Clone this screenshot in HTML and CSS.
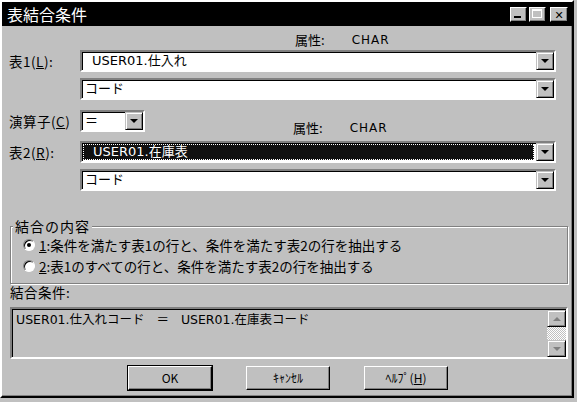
FILE: index.html
```html
<!doctype html>
<html lang="ja">
<head>
	<meta charset="UTF-8">
	<title>表結合条件</title>
	<link rel="stylesheet" href="styles.css">
</head>
<body>
	<div class="window">
		<div class="titlebar">
			<span class="title">表結合条件</span>
			<div class="tbtns">
				<span class="tbtn min"><i></i></span>
				<span class="tbtn max"><i></i></span>
				<span class="tbtn close">✕</span>
			</div>
		</div>
		<div class="client">
			<div class="attr first">属性:<span class="attr-val">CHAR</span></div>

			<div class="row">
				<span class="lbl">表1(<u>L</u>):</span>
				<div class="combo wide"><span class="val indent">USER01.仕入れ</span><span class="drop"><b></b></span></div>
			</div>
			<div class="row r2">
				<span class="lbl"></span>
				<div class="combo wide"><span class="val">コード</span><span class="drop"><b></b></span></div>
			</div>
			<div class="row r3">
				<span class="lbl">演算子(<u>C</u>)</span>
				<div class="combo op"><span class="val">＝</span><span class="drop"><b></b></span></div>
				<div class="attr second">属性:<span class="attr-val">CHAR</span></div>
			</div>
			<div class="row r4">
				<span class="lbl">表2(<u>R</u>):</span>
				<div class="combo wide sel"><span class="val indent"><span class="focus">USER01.在庫表</span></span><span class="drop"><b></b></span></div>
			</div>
			<div class="row r2">
				<span class="lbl"></span>
				<div class="combo wide"><span class="val">コード</span><span class="drop"><b></b></span></div>
			</div>

			<div class="group">
				<span class="legend">結合の内容</span>
				<label class="radio"><span class="dot on"></span><u>1</u>:条件を満たす表1の行と、条件を満たす表2の行を抽出する</label>
				<label class="radio"><span class="dot"></span><u>2</u>:表1のすべての行と、条件を満たす表2の行を抽出する</label>
			</div>

			<div class="cond-lbl">結合条件:</div>
			<div class="cond">
				<div class="cond-text">USER01.仕入れコード   ＝   USER01.在庫表コード</div>
				<div class="sbar">
					<span class="sbtn"><b class="up"></b></span>
					<span class="track"></span>
					<span class="sbtn"><b class="down"></b></span>
				</div>
			</div>

			<div class="buttons">
				<span class="btn def">OK</span>
				<span class="btn">ｷｬﾝｾﾙ</span>
				<span class="btn">ﾍﾙﾌﾟ(<u>H</u>)</span>
			</div>
		</div>
	</div>
</body>
</html>
```
FILE: styles.css
```css
*{
	margin:0;
	padding:0;
	box-sizing:border-box;
}
body{
	background:#c0c0c0;
	font-family:"Noto Sans CJK JP","DejaVu Sans",sans-serif;
	font-size:12px;
	color:#000;
}
.window{
	width:574px;
	height:398px;
	background:#c0c0c0;
	border:2px solid;
	border-color:#fff #000 #000 #fff;
	box-shadow:inset -1px -1px 0 #808080;
}
.titlebar{
	height:24px;
	background:#000;
	display:flex;
	align-items:center;
	justify-content:space-between;
	padding:0 4px 0 5px;
}
.title{
	color:#fff;
	font-size:16px;
	line-height:24px;
}
.tbtns{
	display:flex;
	gap:2px;
}
.tbtn{
	width:17px;
	height:15px;
	background:#c0c0c0;
	border:1px solid;
	border-color:#fff #000 #000 #fff;
	box-shadow:inset -1px -1px 0 #808080;
	position:relative;
	font-size:11px;
	font-weight:bold;
	line-height:13px;
	text-align:center;
}
.tbtn.close{
	margin-left:2px;
	width:18px;
}
.tbtn.min i{
	position:absolute;
	left:3px;
	bottom:3px;
	width:7px;
	height:2px;
	background:#000;
}
.tbtn.max i{
	position:absolute;
	left:2px;
	top:1px;
	width:10px;
	height:9px;
	border:1px solid #fff;
	border-top-width:2px;
}
.client{
	padding:6px 0 0 6px;
}
.attr{
	display:flex;
	height:14px;
	line-height:14px;
	font-size:13px;
}
.attr-val{
	margin-left:27px;
	font-family:"DejaVu Sans",sans-serif;
	font-size:12px;
	letter-spacing:1px;
}
.attr.first{
	margin-left:287px;
	margin-top:1px;
}
.attr.second{
	margin-left:148px;
	margin-top:11px;
}
.row{
	display:flex;
	align-items:flex-start;
	margin-top:3px;
}
.row.r2{
	margin-top:6px;
}
.row.r3{
	margin-top:10px;
}
.row.r4{
	margin-top:6px;
}
.lbl{
	width:72px;
	font-size:13.5px;
	line-height:22px;
	padding-left:1px;
	letter-spacing:0.5px;
}
.combo{
	height:22px;
	display:flex;
	background:#fff;
	border:2px solid;
	border-color:#808080 #fff #fff #808080;
	box-shadow:inset 1px 1px 0 #000;
}
.combo.wide{
	width:476px;
}
.combo.op{
	width:65px;
}
.val{
	flex:1;
	font-size:13px;
	line-height:18px;
	padding-left:3px;
	font-family:"DejaVu Sans","Noto Sans CJK JP",sans-serif;
}
.val.indent{
	padding-left:10px;
}
.combo.sel .val{
	background:#101010;
	color:#fff;
	margin:1px 2px 1px 1px;
	outline:1px dotted #fff;
	outline-offset:-1px;
	line-height:16px;
}
.drop{
	width:18px;
	height:18px;
	background:#c0c0c0;
	border:1px solid;
	border-color:#c0c0c0 #000 #000 #c0c0c0;
	box-shadow:inset 1px 1px 0 #fff,inset -1px -1px 0 #808080;
	display:flex;
	align-items:center;
	justify-content:center;
}
.drop b{
	width:0;
	height:0;
	border-left:4px solid transparent;
	border-right:4px solid transparent;
	border-top:4px solid #000;
}
.group{
	margin-top:35px;
	margin-left:2px;
	width:558px;
	height:58px;
	border:1px solid #808080;
	box-shadow:1px 1px 0 #fff,inset 1px 1px 0 #fff;
	position:relative;
	padding:7px 0 0 12px;
}
.legend{
	position:absolute;
	left:2px;
	top:-8px;
	background:#c0c0c0;
	padding:0 2px;
	font-size:14px;
	line-height:14px;
	letter-spacing:1px;
}
.radio{
	display:flex;
	align-items:center;
	height:21px;
	font-size:13.5px;
}
.dot{
	width:12px;
	height:12px;
	border-radius:50%;
	background:#fff;
	border:1px solid;
	border-color:#808080 #fff #fff #808080;
	box-shadow:inset 1px 1px 0 #000;
	margin-right:4px;
	position:relative;
}
.dot.on::after{
	content:"";
	position:absolute;
	left:3px;
	top:3px;
	width:4px;
	height:4px;
	border-radius:50%;
	background:#000;
}
.cond-lbl{
	margin-left:2px;
	font-size:13.5px;
	line-height:16px;
	letter-spacing:0.5px;
}
.cond{
	margin-top:7px;
	margin-left:2px;
	width:558px;
	height:52px;
	display:flex;
	border:2px solid;
	border-color:#808080 #fff #fff #808080;
	box-shadow:inset 1px 1px 0 #000;
}
.cond-text{
	flex:1;
	padding:3px 0 0 4px;
	font-size:12.5px;
	line-height:16px;
	white-space:pre;
	font-family:"DejaVu Sans","Noto Sans CJK JP",sans-serif;
}
.sbar{
	width:19px;
	display:flex;
	flex-direction:column;
	margin:1px 0 0;
}
.sbtn{
	height:17px;
	background:#c0c0c0;
	border:1px solid;
	border-color:#c0c0c0 #000 #000 #c0c0c0;
	box-shadow:inset 1px 1px 0 #fff,inset -1px -1px 0 #808080;
	display:flex;
	align-items:center;
	justify-content:center;
}
.sbtn b{
	width:0;
	height:0;
	border-left:4px solid transparent;
	border-right:4px solid transparent;
}
.sbtn b.up{
	border-bottom:4px solid #808080;
}
.sbtn b.down{
	border-top:4px solid #808080;
}
.track{
	flex:1;
	background:repeating-conic-gradient(#fff 0 25%,#c0c0c0 0 50%) 0 0/2px 2px;
}
.buttons{
	display:flex;
	gap:34px;
	margin:7px 0 0 120px;
}
.btn{
	width:84px;
	height:24px;
	background:#c0c0c0;
	border:1px solid;
	border-color:#fff #000 #000 #fff;
	box-shadow:inset -1px -1px 0 #808080;
	text-align:center;
	line-height:21px;
	font-size:12px;
}
.btn.def{
	outline:1px solid #000;
	border-color:#fff #000 #000 #fff;
}
```
